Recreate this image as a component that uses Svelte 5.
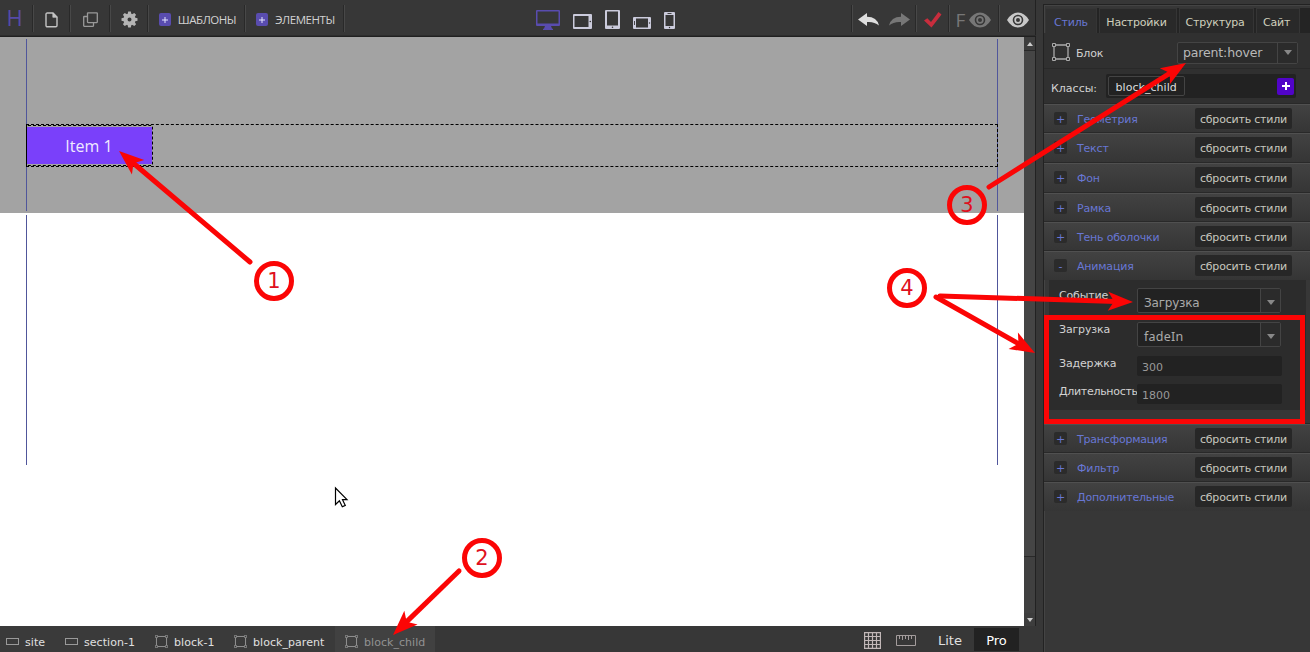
<script>
  const groupsTop = [
    { name: 'Геометрия', h: 29 },
    { name: 'Текст', h: 30 },
    { name: 'Фон', h: 30 },
    { name: 'Рамка', h: 29 },
    { name: 'Тень оболочки', h: 29 },
    { name: 'Анимация', h: 29, open: true }
  ];
  const groupsBottom = [
    { name: 'Трансформация', h: 29 },
    { name: 'Фильтр', h: 29 },
    { name: 'Дополнительные', h: 29 }
  ];
  const marks = [
    { n: 1, x: 274, y: 281 },
    { n: 2, x: 482, y: 558 },
    { n: 3, x: 967, y: 205 },
    { n: 4, x: 907, y: 288 }
  ];
  const arrows = [
    [250, 262, 119, 151],
    [459, 571, 393, 635],
    [989, 187, 1186, 63],
    [940, 296, 1133, 302],
    [936, 297, 1035, 353]
  ].map(([x1, y1, x2, y2]) => {
    const len = Math.hypot(x2 - x1, y2 - y1);
    return { x1, y1, len, angle: (Math.atan2(y2 - y1, x2 - x1) * 180) / Math.PI };
  });
</script>

{#snippet blockIcon(size)}
  <svg width={size} height={size} viewBox="0 0 18 18" fill="none" stroke="currentColor">
    <path stroke-width="1.300" d="M4 2H14M4 16H14M2 4V14M16 4V14" />
    <path d="M.5 .5h3v3h-3zM14.5 .5h3v3h-3zM.5 14.5h3v3h-3zM14.5 14.5h3v3h-3z" />
  </svg>
{/snippet}

{#snippet eye()}
  <svg width="22" height="16" viewBox="0 0 22 16">
    <path fill-rule="evenodd" fill="currentColor" d="M0 8Q4.500 .5 11 .5T22 8Q17.500 15.500 11 15.500T0 8ZM11 2.700a5.300 5.300 0 1 0 0 10.600a5.300 5.300 0 1 0 0-10.600ZM11 4.300a3.700 3.700 0 1 1 0 7.400a3.700 3.700 0 1 1 0-7.400Z" />
    <circle cx="11" cy="8" r="2" fill="#373737" />
  </svg>
{/snippet}

{#snippet group(g)}
  <div class="group" style="height:{g.h}px">
    <span class="toggle">{g.open ? '-' : '+'}</span>
    <span class="title">{g.name}</span>
    <button class="reset">сбросить стили</button>
  </div>
{/snippet}

<div class="app">
  <main>
    <header>
      <div class="cell logo" style="width:34px">H</div>
      <div class="cell icon" style="width:37px">
        <svg width="13" height="16" viewBox="0 0 13 16" fill="none" stroke="#c4c4c4" stroke-width="1.400"><path d="M2.500 1H8L12 5V13.500a1.300 1.300 0 0 1-1.300 1.300H2.300A1.300 1.300 0 0 1 1 13.500V2.300A1.300 1.300 0 0 1 2.500 1Z" /><path d="M7.800 1L12 5.300H7.800Z" fill="#c4c4c4" stroke-width=".7" /></svg>
      </div>
      <div class="cell" style="width:40px">
        <svg width="15" height="15" viewBox="0 0 15 15" fill="none" stroke="#999" stroke-width="1.300"><rect x="4.500" y=".8" width="9.800" height="9.800" rx=".5" /><path d="M4.500 4.500H1.200a.5.5 0 0 0-.5.500V13.800a.5.500 0 0 0 .5.500H10a.5.500 0 0 0 .5-.5V10.600" /></svg>
      </div>
      <div class="cell" style="width:38px">
        <svg width="17" height="17" viewBox="-8.500 -8.500 17 17" fill="#b4b4b4">
          {#each [0, 45, 90, 135, 180, 225, 270, 315] as a}
            <path d="M-2-5L-1.300-8H1.300L2-5Z" transform="rotate({a})" />
          {/each}
          <path fill-rule="evenodd" d="M0-6a6 6 0 1 0 0 12a6 6 0 1 0 0-12ZM0-2a2 2 0 1 1 0 4a2 2 0 1 1 0-4Z" />
        </svg>
      </div>
      <div class="cell add" style="width:97px"><i><svg width="8" height="8"><path d="M4 1V7M1 4H7" stroke="#e4e4ff" /></svg></i><span>ШАБЛОНЫ</span></div>
      <div class="cell add" style="width:99px"><i><svg width="8" height="8"><path d="M4 1V7M1 4H7" stroke="#e4e4ff" /></svg></i><span>ЭЛЕМЕНТЫ</span></div>
      <div class="devices">
        <svg width="24" height="20" viewBox="0 0 24 20"><path fill="#594caf" fill-rule="evenodd" d="M1 0H23a1 1 0 0 1 1 1V15a1 1 0 0 1-1 1H15l1 2.500 1 .5v1H7v-1l1-.5 1-2.500H1a1 1 0 0 1-1-1V1a1 1 0 0 1 1-1ZM1.500 1.500V13.500H22.500V1.500Z" /></svg>
        <svg width="19" height="15" viewBox="0 0 19 15"><path fill="#cbcbdc" fill-rule="evenodd" d="M1 0H18a1 1 0 0 1 1 1V14a1 1 0 0 1-1 1H1a1 1 0 0 1-1-1V1a1 1 0 0 1 1-1ZM1.500 2V13H15.500V2Z" /><circle cx="17.300" cy="7.500" r=".8" fill="#333" /></svg>
        <svg width="15" height="19" viewBox="0 0 15 19"><path fill="#cbcbdc" fill-rule="evenodd" d="M1 0H14a1 1 0 0 1 1 1V18a1 1 0 0 1-1 1H1a1 1 0 0 1-1-1V1a1 1 0 0 1 1-1ZM2 1.500V15.500H13V1.500Z" /><circle cx="7.500" cy="17.300" r=".8" fill="#333" /></svg>
        <svg width="18" height="12" viewBox="0 0 18 12"><path fill="#cbcbdc" fill-rule="evenodd" d="M1 0H17a1 1 0 0 1 1 1V11a1 1 0 0 1-1 1H1a1 1 0 0 1-1-1V1a1 1 0 0 1 1-1ZM3 1.500V10.500H15V1.500Z" /><circle cx="16.500" cy="6" r=".7" fill="#333" /><path d="M1.500 4V8" stroke="#444" /></svg>
        <svg width="11" height="17" viewBox="0 0 11 17"><path fill="#cbcbdc" fill-rule="evenodd" d="M1 0H10a1 1 0 0 1 1 1V16a1 1 0 0 1-1 1H1a1 1 0 0 1-1-1V1a1 1 0 0 1 1-1ZM1.500 3V14H9.500V3Z" /><circle cx="5.500" cy="15.500" r=".7" fill="#333" /><path d="M3.500 1.500H7.500" stroke="#444" /></svg>
      </div>
      <div class="cell history" style="width:64px">
        <svg width="21" height="14" viewBox="0 0 21 14"><path fill="#dedede" d="M0 6.500L9 0V3.800Q19 4 21 12.500Q16 8.300 9 9V13Z" /></svg>
        <svg width="21" height="14" viewBox="0 0 21 14"><path fill="#777" d="M21 6.500L12 0V3.800Q2 4 0 12.500Q5 8.300 12 9V13Z" /></svg>
      </div>
      <div class="cell" style="width:33px">
        <svg width="18" height="16" viewBox="0 0 18 16"><path fill="#c82d3d" d="M0 8.500L3.300 6.200L7 10L14.500 0L17.500 2.500L7.500 15.500Z" /></svg>
      </div>
      <div class="cell full" style="width:50px"><span>F</span>{@render eye()}</div>
      <div class="cell preview" style="width:36px">{@render eye()}</div>
    </header>

    <div class="stage">
      <div class="canvas">
        <section class="grey"><div class="guides">
          <div class="parent"><a class="child">Item 1</a></div>
        </div></section>
        <section class="white"><div class="guides"></div></section>
      </div>
      <div class="scroll">
        <span><svg width="6" height="4"><path d="M0 4L3 0L6 4Z" fill="#ccc" /></svg></span>
        <div class="thumb"></div>
        <span><svg width="6" height="4"><path d="M0 0L3 4L6 0Z" fill="#ccc" /></svg></span>
      </div>
    </div>

    <footer>
      <div class="crumb" style="width:59px"><i><svg width="13" height="7"><rect x=".5" y=".5" width="12" height="6" fill="none" stroke="#999" /></svg></i>site</div>
      <div class="crumb" style="width:90px"><i><svg width="13" height="7"><rect x=".5" y=".5" width="12" height="6" fill="none" stroke="#999" /></svg></i>section-1</div>
      <div class="crumb" style="width:79px"><i>{@render blockIcon(13)}</i>block-1</div>
      <div class="crumb" style="width:107px"><i>{@render blockIcon(13)}</i>block_parent</div>
      <div class="crumb current"><i>{@render blockIcon(13)}</i>block_child</div>
      <div class="tools">
        <svg width="17" height="17" viewBox="0 0 17 17" fill="none" stroke="#c1b7b7" stroke-width="1.200"><path d="M.6 .6H16.400V16.400H.6ZM4.500 0V17M8.500 0V17M12.500 0V17M0 4.500H17M0 8.500H17M0 12.500H17" /></svg>
        <svg width="20" height="11" viewBox="0 0 20 11" fill="none" stroke="#a39c9c"><path d="M.5 .5H19.500V10.500H.5ZM3.500 1V4M6.500 1V5M9.500 1V4M12.500 1V5M15.500 1V4" /></svg>
      </div>
      <div class="mode">Lite</div>
      <div class="mode pro">Pro</div>
    </footer>
  </main>

  <aside>
    <nav>
      <span class="tab active" style="width:52px">Стиль</span>
      <span class="tab" style="width:78px">Настройки</span>
      <span class="tab" style="width:75px">Структура</span>
      <span class="tab" style="width:44px">Сайт</span>
    </nav>
    <div class="target">
      <i>{@render blockIcon(18)}</i>
      <span>Блок</span>
      <div class="select state"><b>parent:hover</b><em><svg width="8" height="5"><path d="M0 0H8L4 5Z" fill="#888" /></svg></em></div>
    </div>
    <div class="classes">
      <span>Классы:</span>
      <div class="box"><span class="tag">block_child</span><span class="plus"><svg width="10" height="10"><path d="M5 1V9M1 5H9" stroke="#fff" stroke-width="2" /></svg></span></div>
    </div>
    {#each groupsTop as g}{@render group(g)}{/each}
    <div class="animation">
      <div class="field f1"><label for="ev">Событие</label><div class="select" id="ev"><b>Загрузка</b><em><svg width="8" height="5"><path d="M0 0H8L4 5Z" fill="#888" /></svg></em></div></div>
      <div class="field f2"><label for="fx">Загрузка</label><div class="select" id="fx"><b class="effect">fadeIn</b><em><svg width="8" height="5"><path d="M0 0H8L4 5Z" fill="#888" /></svg></em></div></div>
      <div class="field f3"><label for="delay">Задержка</label><div class="input" id="delay">300</div></div>
      <div class="field f4"><label for="dur">Длительность</label><div class="input" id="dur">1800</div></div>
    </div>
    {#each groupsBottom as g}{@render group(g)}{/each}
  </aside>

  <svg class="overlay" width="1310" height="652" viewBox="0 0 1310 652">
    <rect x="1046.500" y="317.500" width="256" height="104" fill="none" stroke="#fb0505" stroke-width="5" />
    {#each arrows as a}
      <g transform="translate({a.x1} {a.y1}) rotate({a.angle})">
        <path d="M0 0H{a.len - 17}" stroke="#fb0505" stroke-width="5" stroke-linecap="round" />
        <path d="M{a.len} 0l-25-9.500l6 9.500l-6 9.500Z" fill="#fb0505" />
      </g>
    {/each}
    {#each marks as m}
      <circle cx={m.x} cy={m.y} r="17.500" fill="none" stroke="#fb0505" stroke-width="5" />
      <text x={m.x} y={m.y + 7} text-anchor="middle" fill="#df1020" font-size="21">{m.n}</text>
    {/each}
    <path d="M335.500 488V504.500L339.400 500.800L342.300 506.800L345.300 505.400L342.500 499.700H347Z" fill="#fff" stroke="#000" stroke-width="1.200" />
  </svg>
</div>

<style>
  :global(body) { margin: 0; background: #373737; }
  * { box-sizing: border-box; }
  svg { display: block; flex: none; }
  i, em, b { font-style: normal; font-weight: normal; }
  .app { position: relative; display: flex; width: 1310px; height: 652px; overflow: hidden; background: #373737; color: #d2d2d2; font: 11px/14px "DejaVu Sans", sans-serif; }
  .overlay { position: absolute; left: 0; top: 0; pointer-events: none; }
  main { width: 1036px; display: flex; flex-direction: column; flex: none; border-right: 1px solid #222; }
  header { height: 37px; width: 1036px; display: flex; padding: 5px 0 4px; border-bottom: 1px solid #202020; box-shadow: inset 0 -1px #2d2d2d; flex: none; }
  .cell { display: flex; align-items: center; justify-content: center; flex: none; padding: 2px 1px 0 0; border-right: 1px solid #484848; box-shadow: inset -1px 0 #292929; }
  .cell:last-child { border: 0; box-shadow: none; }
  .logo { color: #554aa9; font: 22px/28px "Open Sans", sans-serif; padding: 0 4px 3px 0; }
  .icon { padding-right: 2px; }
  .add { gap: 7px; font: 11.500px/16px "Open Sans", sans-serif; padding: 2px 0 0 1px; }
  .add span { letter-spacing: -.45px; }
  .add i { width: 12px; height: 13px; background: #594caf; border-radius: 2px; display: grid; place-items: center; }
  .devices { flex: 1; display: flex; align-items: flex-end; gap: 13px; padding: 0 0 3px 191px; border-right: 1px solid #484848; box-shadow: inset -1px 0 #292929; }
  .devices svg:first-child { margin-bottom: -1px; }
  .history { gap: 10px; padding-right: 2px; }
  .full { color: #777; gap: 4px; padding-right: 2px; }
  .full span { font: 19px/20px "Open Sans", sans-serif; }
  .preview { color: #c8c8c8; padding: 2px 0 0; }
  .stage { flex: 1; display: flex; min-height: 0; }
  .canvas { width: 1024px; background: #fff; flex: none; }
  .grey { height: 176px; padding: 2px 26px; background: #a3a3a3; }
  .white { height: 254px; padding: 2px 26px; }
  .guides { height: 100%; border: solid #50569b; border-width: 0 1px; padding-top: 85px; }
  .parent { height: 43px; margin: 0 -1px; border: 1px dashed #000; }
  .child { display: flex; justify-content: center; align-items: center; width: 127px; height: 41px; margin-left: -1px; border: 1px dashed #000; border-radius: 2px; font: 16px/22px "Open Sans", sans-serif; color: #f0eaff; padding: 1px 1px 0 0; background: linear-gradient(#7a40fa, #7a40fa) 0 1px / 100% 37px no-repeat; }
  .scroll { width: 11px; background: #404040; display: flex; flex-direction: column; }
  .scroll span { height: 13px; display: grid; place-items: center; background: #3d3d3d; flex: none; }
  .thumb { flex: 1; border-top: 1px solid #292929; margin-bottom: 56px; border-bottom: 1px solid #292929; background: #454545; }
  footer { height: 26px; width: 1036px; display: flex; align-items: stretch; background: #373737; color: #e0e0e0; flex: none; }
  .crumb { display: flex; align-items: center; gap: 6px; padding: 8px 0 0 6px; background: #3a3a3a; white-space: nowrap; letter-spacing: .05px; }
  .crumb i { color: #999; margin-bottom: 3px; }
  .current { width: 100px; padding-left: 10px; color: #929292; background: #414141; }
  .tools { flex: 1; display: flex; justify-content: flex-end; align-items: center; gap: 15px; padding: 3px 12px 0 0; }
  .mode { width: 44px; margin-bottom: -1px; display: grid; place-items: center; font-size: 13px; padding-top: 3px; }
  .pro { width: 45px; margin: 2px 17px 1px 2px; padding: 2px 0 0; background: #222; color: #fff; }

  aside { width: 267px; height: 648px; margin: 4px 0 0 7px; border-left: 1px solid #222; border-top: 1px solid #222; padding-top: 3px; box-shadow: inset 1px 1px #444; flex: none; overflow: hidden; display: flex; flex-direction: column; letter-spacing: -.2px; }
  nav { height: 25px; display: flex; gap: 2px; background: #242424; margin-left: 1px; flex: none; }
  .tab { display: flex; align-items: center; justify-content: center; background: #292929; border: 1px solid #353535; border-bottom: 0; padding: 3px 3px 0 0; flex: none; color: #d0d0bd; }
  .tab.active { background: #303030; color: #6877d4; padding-right: 0; }
  .target { height: 36px; background: #303030; display: flex; align-items: center; padding: 4px 12px 0 8px; border-bottom: 1px solid #292929; flex: none; }
  .target i { color: #aaa; width: 24px; margin-top: -1px; }
  .target > span { padding-top: 2px; }
  .select { display: flex; width: 144px; height: 25px; background: #222; border: 1px solid #444; border-radius: 2px; color: #aaa; font-size: 12px; }
  .select b { flex: 1; display: flex; align-items: center; padding: 4px 0 0 6px; border-right: 1px solid #444; }
  .select .effect { font: 12.500px/14px "Noto Sans", sans-serif; letter-spacing: .25px; }
  .select em { width: 19px; display: grid; place-items: center; background: #2b2b2b; padding-top: 3px; }
  .state { margin-left: auto; width: 121px; height: 22px; background: #2b2b2b; color: #b9b9b9; }
  .state b { padding: 0 0 0 5px; font-size: 12.500px; letter-spacing: -.15px; }
  .state em { padding: 0; }
  .classes { height: 35px; background: #303030; display: flex; align-items: flex-start; padding: 5px 14px 0 7px; justify-content: space-between; flex: none; }
  .classes > span { padding-top: 8px; letter-spacing: 0; }
  .box { display: flex; justify-content: space-between; align-items: center; width: 190px; height: 24px; padding: 0 2px; background: #222; border-radius: 2px; color: #ddd; letter-spacing: .05px; }
  .tag { width: 77px; height: 20px; border: 1px solid #444; border-radius: 2px; line-height: 21px; padding-left: 6.500px; }
  .plus { width: 17px; height: 17px; background: #5104c8; border-radius: 2px; display: grid; place-items: center; }
  .group { display: flex; align-items: flex-start; padding: 3px 18px 0 10px; background: linear-gradient(#424242, #353535); border-top: 1px solid #505050; box-shadow: 0 -1px #292929; flex: none; color: #6877d4; }
  .toggle { width: 13px; height: 13px; margin-top: 4px; line-height: 15px; text-align: center; background: #2b2b2b; border-radius: 2px; }
  .title { padding: 5px 0 0 10px; }
  .reset { margin: 0 0 0 auto; width: 97px; height: 21px; border: 0; border-radius: 2px; background: #272727; color: #c7c7bf; font: inherit; letter-spacing: -.2px; padding: 2px 0 0; white-space: nowrap; }
  .animation { margin: 0 4px 14px 5px; height: 130px; padding: 8px 10px 0; background: #2c2c2c; flex: none; }
  .field { display: grid; grid-template-columns: 78px 145px; }
  .field label { white-space: nowrap; padding-top: 1px; letter-spacing: -.15px; }
  .f1, .f2 { height: 34px; }
  .f3 { height: 28px; }
  .f4 label { letter-spacing: -.3px; }
  .input { height: 20px; background: #222; border-radius: 2px; color: #999; padding: 5px 5px 0; letter-spacing: 0; }
</style>
